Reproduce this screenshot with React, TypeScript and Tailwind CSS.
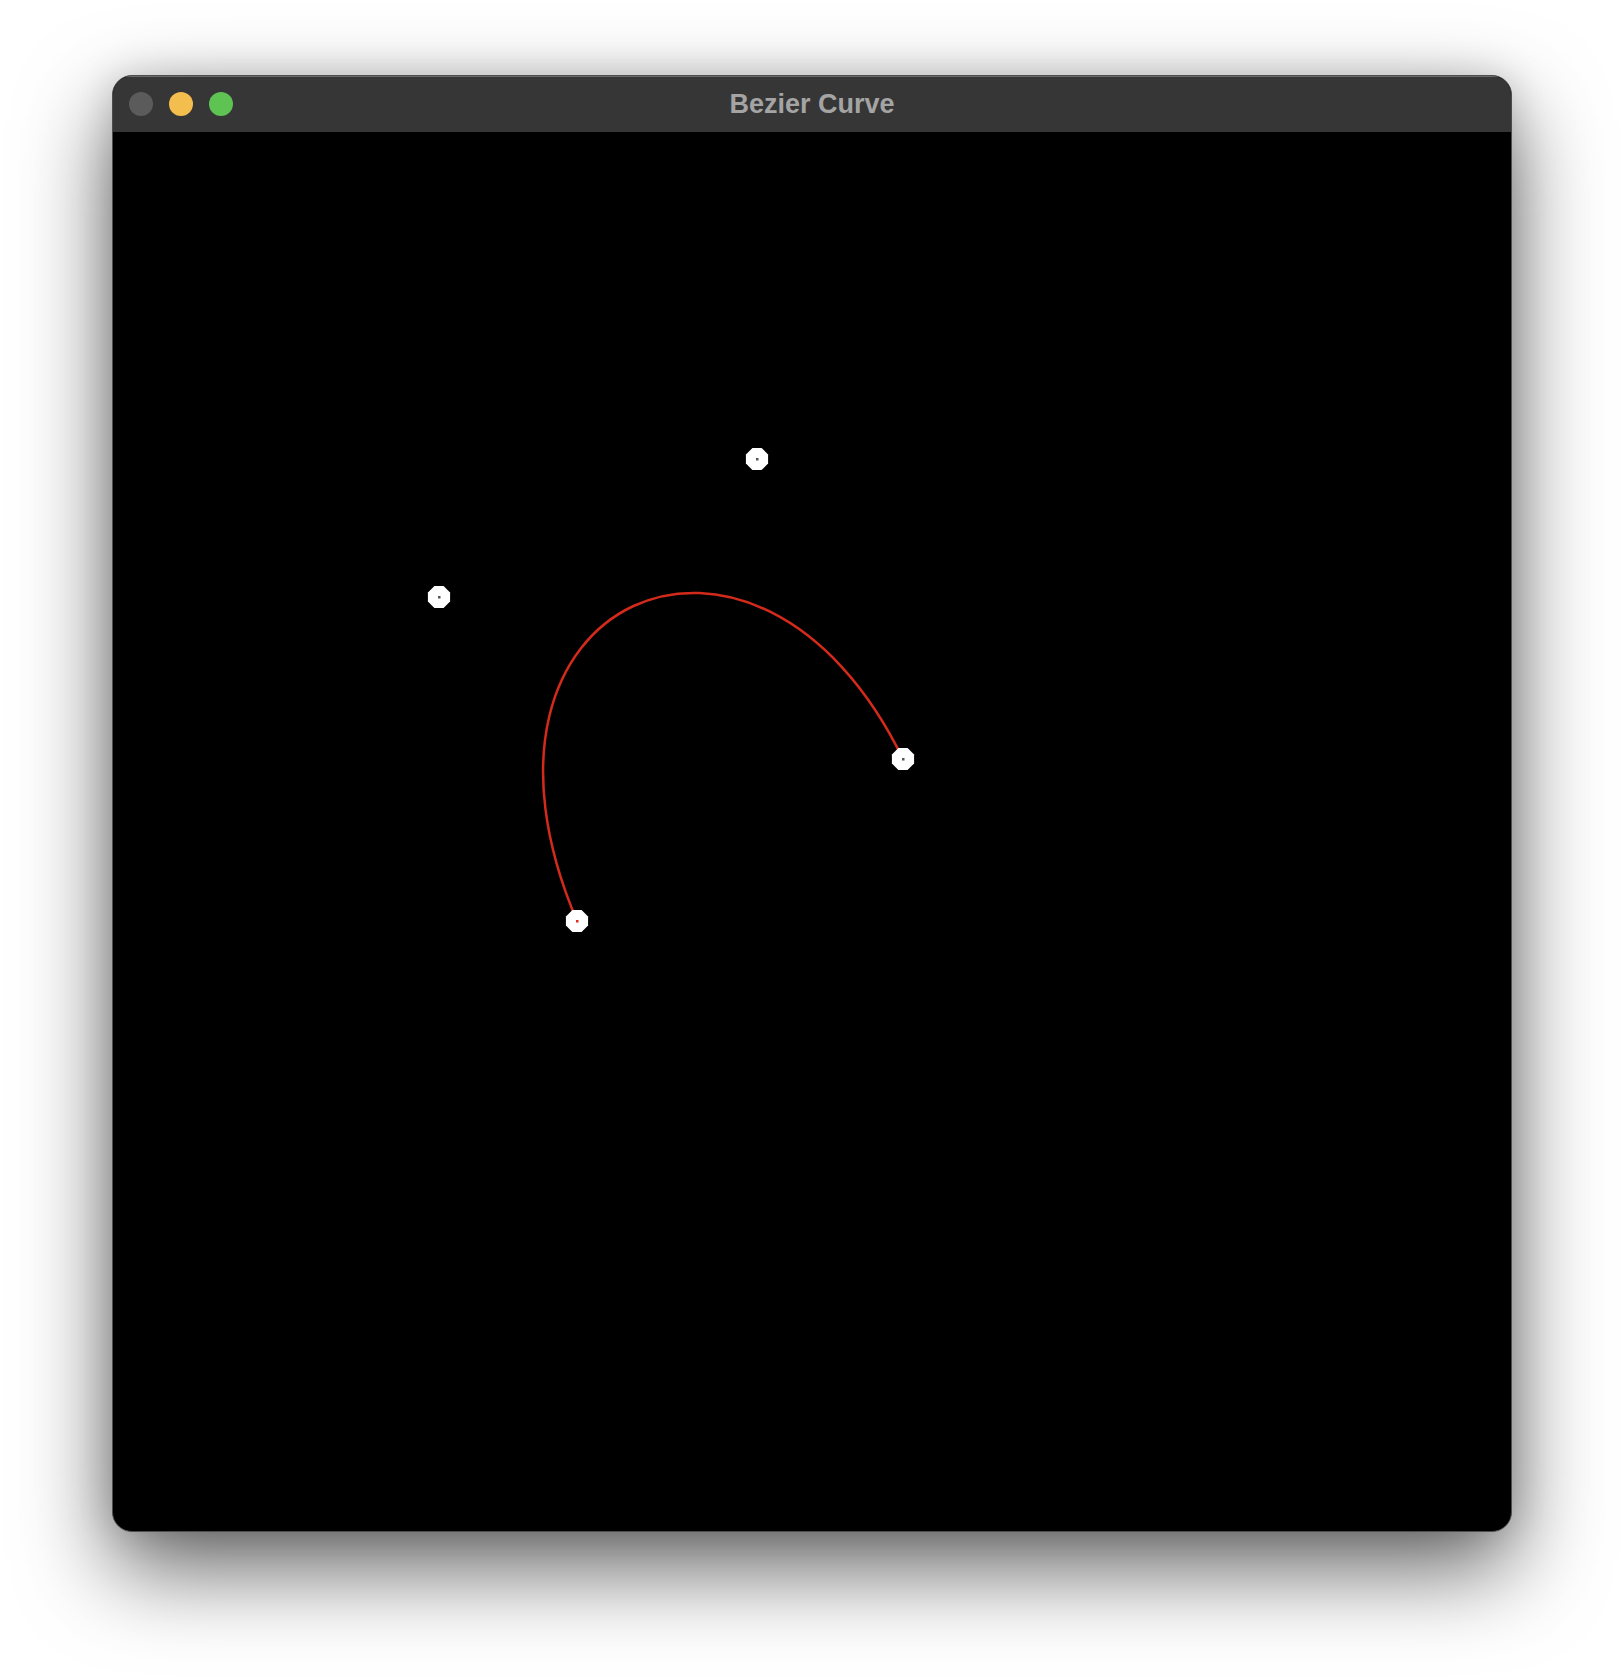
const points = [
  { x: 465, y: 789, dot: "#d9301f" },
  { x: 327, y: 465, dot: "#555555" },
  { x: 645, y: 327, dot: "#555555" },
  { x: 791, y: 627, dot: "#555555" },
];

function octagon(cx: number, cy: number, r: number) {
  const pts: string[] = [];
  for (let i = 0; i < 8; i++) {
    const a = (Math.PI / 8) * (2 * i + 1);
    pts.push(`${cx + r * Math.cos(a)},${cy + r * Math.sin(a)}`);
  }
  return pts.join(" ");
}

function BezierCanvas() {
  const [p0, p1, p2, p3] = points;
  const d = `M${p0.x} ${p0.y} C${p1.x} ${p1.y} ${p2.x} ${p2.y} ${p3.x} ${p3.y}`;
  return (
    <svg width={1398} height={1399} viewBox="1 0 1398 1399" className="block">
      <path d={d} fill="none" stroke="#d42a1c" strokeWidth={2.5} />
      {points.map((p, i) => (
        <g key={i}>
          <polygon points={octagon(p.x, p.y, 12)} fill="#ffffff" />
          <rect x={p.x - 1} y={p.y - 1} width={2.5} height={2.5} fill={p.dot} />
        </g>
      ))}
    </svg>
  );
}

export default function App() {
  return (
    <div className="w-[1624px] h-[1680px] bg-white pt-[75px] pl-[112px]">
      {/* window */}
      <div className="w-[1400px] rounded-[20px] border border-[#4d4d4d] bg-black overflow-hidden shadow-[0_36px_90px_rgba(0,0,0,0.62),0_0_36px_rgba(0,0,0,0.14)]">
        <div className="relative h-[56px] bg-[#363636] border-t border-[#6a6a6a] flex items-center justify-center">
          <div className="absolute left-[16px] top-[15px] flex gap-[16px]">
            <span className="w-[24px] h-[24px] rounded-full bg-[#5b5b5b]" />
            <span className="w-[24px] h-[24px] rounded-full bg-[#f4be4f]" />
            <span className="w-[24px] h-[24px] rounded-full bg-[#5fc354]" />
          </div>
          <span className="text-[27px] font-bold text-[#a4a4a4] font-['Liberation_Sans',Arial,sans-serif] leading-none">
            Bezier Curve
          </span>
        </div>
        <BezierCanvas />
      </div>
    </div>
  );
}
